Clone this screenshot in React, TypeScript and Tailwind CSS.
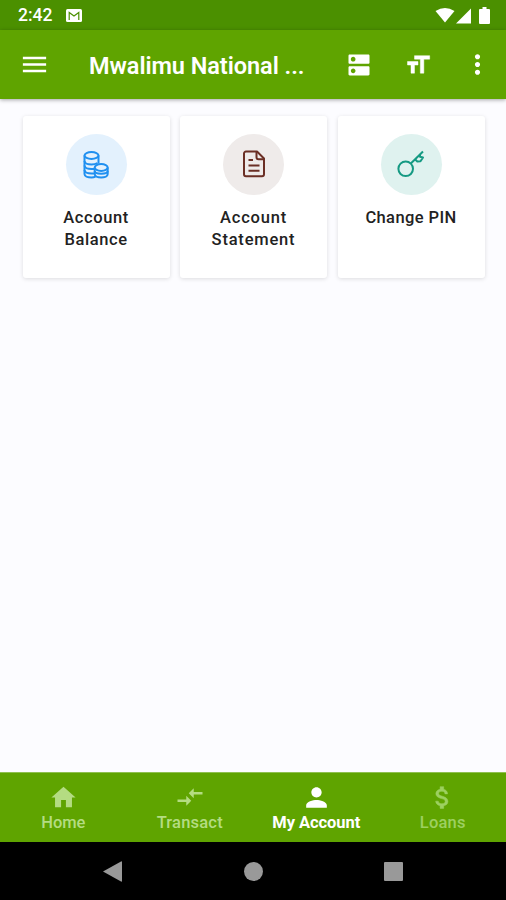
import type { ReactNode } from 'react';
import { MdCompareArrows, MdDns, MdHome, MdMenu, MdMoreVert, MdPerson } from 'react-icons/md';

interface AccountCardProps {
  lines: string[];
  circle: string;
  tracking: string;
  children: ReactNode;
}

function StatusBar() {
  return (
    <div className="flex h-[30px] shrink-0 items-center bg-[#4b9000] pl-[18px] pr-[16px] pt-px text-white">
      <span className="mt-px text-[17.5px] font-medium leading-none">2:42</span>
      <svg className="ml-[14px] h-[13px] w-[16px]" viewBox="0 0 16 13">
        <rect width="16" height="13" rx="1.5" fill="white" />
        <path d="M3.2 11V3.5L8 7l4.800-3.500V11" fill="none" stroke="#4b9000" strokeWidth="1.2" />
      </svg>
      <div className="ml-auto flex items-center">
        <svg className="h-4 w-5" viewBox="0 0 20 16" fill="white">
          <path d="M.5 3Q10-3 19.500 3L10 14.500z" />
        </svg>
        <svg className="ml-[1px] h-4 w-[15px]" viewBox="0 0 15 16" fill="white">
          <path d="M0 15.500 15 .5v15z" />
        </svg>
        <svg className="ml-[8px] h-[17px] w-[11px]" viewBox="0 0 11 17" fill="white">
          <path d="M3.500 0h4v2H10a1 1 0 0 1 1 1v13a1 1 0 0 1-1 1H1a1 1 0 0 1-1-1V3a1 1 0 0 1 1-1h2.500z" />
        </svg>
      </div>
    </div>
  );
}

function TextSizeIcon() {
  return (
    <svg
      className="ml-[31px] h-[28px] w-[28px]"
      viewBox="0 0 24 24"
      fill="currentColor"
      stroke="currentColor"
      strokeWidth="0.4"
    >
      <path d="M9 4v3h5v12h3V7h5V4H9zm-6 8h3v7h3v-7h3V9H3v3z" />
    </svg>
  );
}

function DollarIcon({ size }: { size: number }) {
  return (
    <svg width={size} height={size} viewBox="0 0 24 24" fill="currentColor" stroke="currentColor" strokeWidth="0.4">
      <path d="M11.8 10.900c-2.270-.590-3-1.200-3-2.150 0-1.090 1.010-1.850 2.700-1.850 1.780 0 2.440.850 2.500 2.100h2.210c-.070-1.720-1.120-3.300-3.210-3.810V3h-3v2.160c-1.940.420-3.500 1.680-3.500 3.610 0 2.310 1.910 3.460 4.700 4.130 2.500.6 3 1.480 3 2.410 0 .690-.490 1.790-2.700 1.790-2.060 0-2.870-.920-2.980-2.100h-2.200c.120 2.190 1.760 3.420 3.680 3.830V21h3v-2.150c1.950-.370 3.500-1.500 3.500-3.550 0-2.840-2.430-3.810-4.700-4.400z" />
    </svg>
  );
}

function AppHeader() {
  return (
    <header className="z-10 flex h-[69px] shrink-0 items-center bg-[#5fa400] pl-[19px] pr-[13px] text-white shadow-[0_1px_4px_rgba(0,0,0,0.35)]">
      <MdMenu size={31} />
      <h1 className="ml-[39px] mt-[4px] w-[240px] whitespace-nowrap text-[23.5px] font-semibold leading-none tracking-[-0.05px]">
        Mwalimu National ...
      </h1>
      <MdDns size={28} className="ml-[16px]" />
      <TextSizeIcon />
      <MdMoreVert size={31} className="ml-auto" />
    </header>
  );
}

function CoinsIcon() {
  return (
    <svg className="h-[28px] w-[26px]" viewBox="0 0 26 28" fill="none" stroke="#2090f0" strokeWidth="2">
      <ellipse cx="8.500" cy="4.500" rx="7" ry="3.500" />
      <path d="M1.500 4.500v18.500c0 2 3 3.500 7 3.500 1.500 0 3-.3 4-.8" />
      <path d="M15.500 4.500v8" />
      <path d="M1.500 10c0 2 3 3.500 7 3.500 2.500 0 4.500-.6 6-1.500" />
      <path d="M1.500 14.500c0 2 3 3.500 7 3.500h2.500" />
      <path d="M1.500 19c0 2 3 3.500 7 3.500h2.500" />
      <ellipse cx="18.200" cy="16.500" rx="6.500" ry="3.500" />
      <path d="M11.700 16.500V23c0 2 2.800 3.500 6.500 3.500s6.500-1.500 6.500-3.500v-6.500" />
      <path d="M11.700 20c0 1.800 2.800 2.700 6.500 2.700s6.500-.9 6.500-2.700" />
    </svg>
  );
}

function StatementIcon() {
  return (
    <svg
      className="mb-[2px] h-[28px] w-[22px]"
      viewBox="0 0 22 28"
      fill="none"
      stroke="#6b2f25"
      strokeWidth="2"
      strokeLinejoin="round"
    >
      <path d="M3 1.500h11L21 8.500v15.800a2 2 0 0 1-2 2H3a2 2 0 0 1-2-2V3.500a2 2 0 0 1 2-2z" />
      <path d="M13.500 1.500v5.800a2 2 0 0 0 2 2H21" />
      <path d="M5.500 10h4.500M5.500 15.500h11M5.500 20.800h11" />
    </svg>
  );
}

function KeyIcon() {
  return (
    <svg className="mb-[2px] h-[28px] w-[28px]" viewBox="0 0 28 28" fill="none" stroke="#159a83" strokeWidth="2">
      <circle cx="8.700" cy="18.800" r="7.300" />
      <path d="M13.800 13.500 26 1.500" />
      <path d="M23 4.500v2.300l3 .7-2.500 3.800-3.200.2L18 9.300" strokeLinejoin="round" />
    </svg>
  );
}

function AccountCard({ lines, circle, tracking, children }: AccountCardProps) {
  return (
    <div className="flex h-[162px] flex-col items-center rounded-[3px] bg-white pt-[18px] shadow-[0_1px_4px_rgba(0,0,0,0.13)]">
      <div className={`flex h-[61px] w-[61px] items-center justify-center rounded-full ${circle}`}>
        {children}
      </div>
      <div className="mt-[12px] text-center text-[16.5px] font-medium leading-[22px] text-[#222]">
        {lines.map((line) => (
          <div key={line} className={tracking}>{line}</div>
        ))}
      </div>
    </div>
  );
}

const tabs = [
  { label: 'Home', icon: MdHome, size: 29, style: 'text-[#b4dc82] font-medium', tracking: 'tracking-[-0.1px]' },
  { label: 'Transact', icon: MdCompareArrows, size: 30, style: 'text-[#b4dc82] font-medium', tracking: 'tracking-[0.2px]' },
  { label: 'My Account', icon: MdPerson, size: 31, style: 'text-white font-bold', tracking: 'tracking-[-0.05px]' },
  { label: 'Loans', icon: DollarIcon, size: 29, style: 'text-[#9dd060] font-medium', tracking: 'tracking-[0.2px]' },
];

function BottomTabs() {
  return (
    <nav className="grid h-[70px] shrink-0 grid-cols-4 border-t border-[#8fc050] bg-[#5fa400]">
      {tabs.map(({ label, icon: Icon, size, style, tracking }) => (
        <div key={label} className={`flex flex-col items-center pt-[8px] ${style}`}>
          <div className="flex h-[32px] items-center">
            <Icon size={size} />
          </div>
          <span className={`whitespace-nowrap text-[16.5px] leading-[20px] ${tracking}`}>{label}</span>
        </div>
      ))}
    </nav>
  );
}

function SystemNav() {
  return (
    <div className="flex h-[58px] shrink-0 items-center justify-between bg-black pl-[103px] pr-[103px]">
      <svg className="h-[21px] w-[19px]" viewBox="0 0 19 21" fill="#999">
        <path d="M0 10.500 18 .5q1-.5 1 .5v19q0 1-1 .5z" />
      </svg>
      <div className="h-[19px] w-[19px] rounded-full bg-[#999]" />
      <div className="h-[19px] w-[19px] rounded-[1px] bg-[#999]" />
    </div>
  );
}

export default function App() {
  return (
    <div className="flex h-[900px] w-[506px] flex-col overflow-hidden bg-[#fcfcff] font-[Roboto,sans-serif]">
      <StatusBar />
      <AppHeader />
      <main className="grid flex-1 grid-cols-3 content-start gap-[10.5px] pl-[22.5px] pr-[21.5px] pt-[17px]">
        <AccountCard lines={['Account', 'Balance']} circle="bg-[#e3f1fd]" tracking="tracking-[0.6px]">
          <CoinsIcon />
        </AccountCard>
        <AccountCard lines={['Account', 'Statement']} circle="bg-[#efebea]" tracking="tracking-[0.8px]">
          <StatementIcon />
        </AccountCard>
        <AccountCard lines={['Change PIN']} circle="bg-[#dff2ef]" tracking="tracking-[0.4px]">
          <KeyIcon />
        </AccountCard>
      </main>
      <BottomTabs />
      <SystemNav />
    </div>
  );
}
